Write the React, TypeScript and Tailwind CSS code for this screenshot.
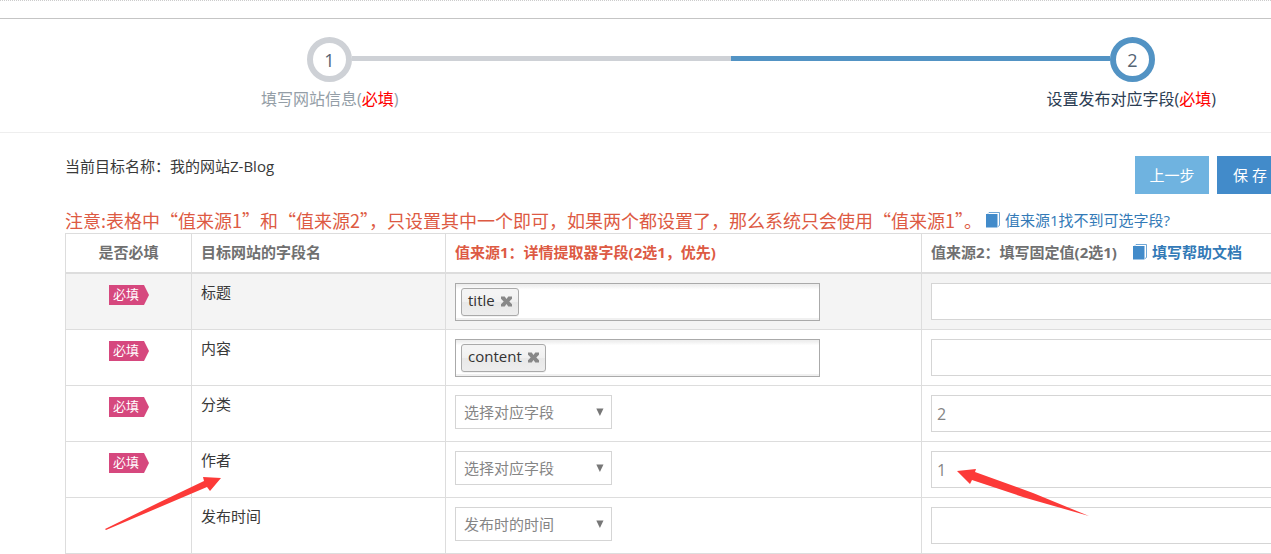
import React from 'react';

type Field = {
  name: string;
  required: boolean;
  tag?: string;
  option?: string;
  fixed: string;
};

const fields: Field[] = [
  { name: '标题', required: true, tag: 'title', fixed: '' },
  { name: '内容', required: true, tag: 'content', fixed: '' },
  { name: '分类', required: true, option: '选择对应字段', fixed: '2' },
  { name: '作者', required: true, option: '选择对应字段', fixed: '1' },
  { name: '发布时间', required: false, option: '发布时的时间', fixed: '' },
];

function BookIcon() {
  return (
    <svg className="w-[15px] h-4 shrink-0" viewBox="0 0 15 16" aria-hidden="true">
      <path d="M2 1.5L3 .5h10.5v13l-1.5 1" fill="none" stroke="#428bca" strokeOpacity="0.75" strokeWidth="1" />
      <path d="M0 2h11.5v13.5H0z" fill="#428bca" />
    </svg>
  );
}

function RequiredBadge() {
  return (
    <span className="inline-flex mt-[2px] align-top">
      <span className="w-[35px] h-5 bg-[#d6487e] text-white text-[13px] leading-[18px]">必填</span>
      <svg className="w-[5px] h-5" viewBox="0 0 5 20" aria-hidden="true">
        <path d="M0 0l5 10-5 10z" fill="#d6487e" />
      </svg>
    </span>
  );
}

function TagBox({ tag, label }: { tag: string; label: string }) {
  return (
    <div className="flex items-start w-[365px] h-[38px] pl-[5px] pt-1 border border-[#aaa] bg-white bg-[linear-gradient(#eee_1px,#fff_15%)] shadow-[inset_0_-2px_0_#f0f0f0]">
      <span className="flex items-center gap-[6px] h-7 px-[6px] border border-[#aaa] rounded-[3px] bg-[linear-gradient(#f4f4f4_20%,#f0f0f0_50%,#e8e8e8_52%,#eee)] shadow-[0_1px_0_#0000000d] text-[#333] text-[15px] leading-5">
        <span className="pb-1">{tag}</span>
        <button type="button" className="pb-[2px]" aria-label={`删除 ${tag}`}>
          <svg className="block w-[11px] h-[11px]" viewBox="0 0 11 11" aria-hidden="true">
            <path d="M0 0.5h3.7L5.5 2.9 7.3.5H11v2.3L8.3 5.5 11 8.2v2.3H7.3L5.5 8.1 3.7 10.5H0V8.2l2.7-2.7L0 2.8z" fill="#888" />
          </svg>
        </button>
      </span>
      <input className="flex-1 min-w-0 h-7 px-1 bg-transparent outline-none" aria-label={label} />
    </div>
  );
}

function FieldSelect({ option, label }: { option: string; label: string }) {
  return (
    <div className="relative w-[157px]">
      <select
        className="appearance-none w-full h-[34px] pl-2 pr-6 border border-[#d5d5d5] bg-white text-[#858585] text-[15px] leading-5"
        aria-label={label}
        defaultValue={option}
      >
        <option>{option}</option>
      </select>
      <svg className="absolute right-2 top-[13px] w-2 h-2 pointer-events-none" viewBox="0 0 8 8" aria-hidden="true">
        <path d="M.3 .5h7.2L3.9 8z" fill="#777" />
      </svg>
    </div>
  );
}

export default function App() {
  return (
    <div
      lang="zh-CN"
      className="relative overflow-hidden bg-white text-[#393939] text-[15px] leading-[18px] font-['Open_Sans','Noto_Sans_CJK_SC',sans-serif]"
    >
      <div className="h-[18px] border-t border-dotted border-[#ccc]" />

      {/* Steps */}
      <div className="pt-[18px] pb-[21px] border-t border-t-[#c5c5c5] border-b border-b-[#eee] text-base leading-6">
        <div className="flex items-start pl-[307px] pr-[116px]">
          <span className="flex items-center justify-center w-[45px] h-[45px] rounded-full border-6 border-[#ced1d6] text-[#546474] text-lg leading-6">
            1
          </span>
          <span className="flex-1 mt-[19px] h-[5px] bg-[#ced1d6]" />
          <span className="flex-1 mt-[19px] h-[5px] bg-[#5293c4]" />
          <span className="flex items-center justify-center w-[45px] h-[45px] rounded-full border-6 border-[#5293c4] text-[#546474] text-lg leading-6">
            2
          </span>
        </div>
        <div className="flex justify-between mt-[5px] pl-[261px] pr-[55px]">
          <span className="text-[#949ea7]">
            填写网站信息(<span className="text-[#f00]">必填</span>)
          </span>
          <span className="text-[#2b3d53]">
            设置发布对应字段(<span className="text-[#f00]">必填</span>)
          </span>
        </div>
      </div>

      <div className="pt-[23px] pl-[65px] -mr-3">
        <div className="flex items-start justify-between">
          <p className="leading-5">当前目标名称：我的网站Z-Blog</p>
          <div className="flex gap-2 text-white [text-shadow:0_-1px_0_#00000040]">
            <button type="button" className="w-[74px] h-[38px] bg-[#6fb3e0]">上一步</button>
            <button type="button" className="w-[66px] h-[38px] bg-[#428bca]">保 存</button>
          </div>
        </div>

        <div className="flex items-center gap-1 mt-[14px] mb-px h-6 whitespace-nowrap">
          <p className="text-[#dd5a43] text-lg leading-6 font-['Noto_Sans_CJK_SC',sans-serif]">
            注意:表格中“值来源1”和“值来源2”，只设置其中一个即可，如果两个都设置了，那么系统只会使用“值来源1”。
          </p>
          <a href="#fields" className="flex items-center gap-1 text-[#337ab7]">
            <BookIcon />
            值来源1找不到可选字段?
          </a>
        </div>

        <table className="w-full table-fixed border-separate border-spacing-0 border-t border-l border-[#ddd]">
          <colgroup>
            <col className="w-[126px]" />
            <col className="w-[254px]" />
            <col className="w-[476px]" />
            <col />
          </colgroup>
          <thead>
            <tr className="text-left text-[#707070] [&>th]:h-10 [&>th]:px-[9px] [&>th]:pb-[2px] [&>th]:border-r [&>th]:border-b-2 [&>th]:border-[#ddd]">
              <th className="text-center">是否必填</th>
              <th>目标网站的字段名</th>
              <th className="text-[#dd5a43]">值来源1：详情提取器字段(2选1，优先)</th>
              <th>
                <div className="flex items-center gap-4 whitespace-nowrap">
                  值来源2：填写固定值(2选1)
                  <a href="#help" className="flex items-center gap-1 text-[#337ab7]">
                    <BookIcon />
                    填写帮助文档
                  </a>
                </div>
              </th>
            </tr>
          </thead>
          <tbody>
            {fields.map((field) => (
              <tr
                key={field.name}
                className="align-top first:bg-[#f4f4f4] [&>td]:h-14 [&>td]:px-[9px] [&>td]:pt-[9px] [&>td]:pb-2 [&>td]:border-r [&>td]:border-b [&>td]:border-[#ddd]"
              >
                <td className="text-center">{field.required && <RequiredBadge />}</td>
                <td>{field.name}</td>
                <td>
                  {field.tag && <TagBox tag={field.tag} label={`${field.name} 值来源1`} />}
                  {field.option && <FieldSelect option={field.option} label={`${field.name} 值来源1`} />}
                </td>
                <td>
                  <input
                    type="text"
                    className="block w-full h-[37px] px-[5px] border border-[#d5d5d5] bg-white text-[#858585] text-base"
                    aria-label={`${field.name} 值来源2`}
                    defaultValue={field.fixed}
                  />
                </td>
              </tr>
            ))}
          </tbody>
        </table>
      </div>

      {/* Arrows pointing at the author row */}
      <svg className="absolute left-[105px] top-[476px] w-[118px] h-[56px] pointer-events-none" viewBox="0 0 118 56" aria-hidden="true">
        <path d="M0 53L55 26 99 5 98 1 116 2 105 15 102 11 55 31 1 54z" fill="#fc3a38" />
      </svg>
      <svg className="absolute left-[957px] top-[468px] w-[133px] h-[50px] pointer-events-none" viewBox="0 0 133 50" aria-hidden="true">
        <path d="M132 48L69 30 15 12 13 16 0 3 19 1 18 4 76 25z" fill="#fc3a38" />
      </svg>
    </div>
  );
}
